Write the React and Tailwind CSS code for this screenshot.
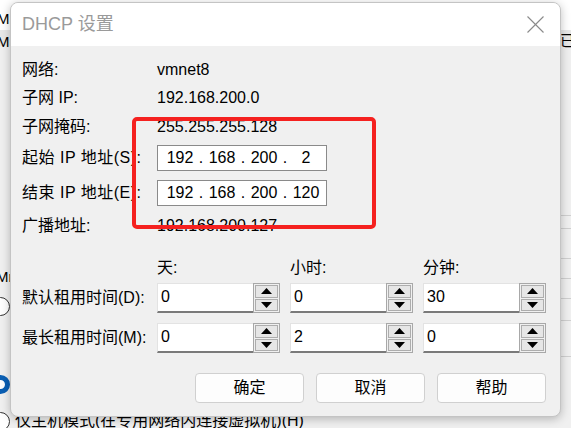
import React from 'react';

const infoRows = [
  { label: '网络:', value: 'vmnet8', h: 'h-[28px]' },
  { label: '子网 IP:', value: '192.168.200.0', h: 'h-[28px]' },
  { label: '子网掩码:', value: '255.255.255.128', h: 'h-[30px]' },
  { label: '起始 IP 地址(S):', ip: ['192', '168', '200', '2'], h: 'h-[32px]' },
  { label: '结束 IP 地址(E):', ip: ['192', '168', '200', '120'], h: 'h-[38px]' },
  { label: '广播地址:', value: '192.168.200.127', h: 'h-[28px]' },
];

const IpBox = ({ parts }) => (
  <div className="flex items-center w-[170px] h-[26px] bg-white border border-[#8a8a8a] pl-[7px]">
    {parts.map((p, i) => (
      <React.Fragment key={i}>
        <span className="w-[30px] text-center">{p}</span>
        {i < 3 && <span className="w-[12px] text-center">.</span>}
      </React.Fragment>
    ))}
  </div>
);

const Arrow = ({ up }) => (
  <div className="flex-1 flex items-center justify-center bg-[#e6e6e6] border border-[#adadad]">
    <svg width="11" height="6" viewBox="0 0 11 6">
      {up ? <polygon points="0,6 11,6 5.5,0" fill="#000" /> : <polygon points="0,0 11,0 5.5,6" fill="#000" />}
    </svg>
  </div>
);

const Spin = ({ value }) => (
  <div className="flex w-[123px] h-[30px] shrink-0">
    <div className="flex-1 bg-white border-t border-l border-[#e3e3e3] border-b-2 border-b-[#7a7a7a] pl-[3px] pt-[3px] text-[16px] leading-[20px]">
      {value}
    </div>
    <div className="w-[27px] flex flex-col gap-[1px] p-[1px] border border-[#a8a8a8] bg-[#f0f0f0]">
      <Arrow up />
      <Arrow />
    </div>
  </div>
);

const Button = ({ children }) => (
  <button className="w-[109px] h-[30px] rounded-[4px] border border-[#d0d0d0] bg-[#fdfdfd] text-[16px] text-black">
    {children}
  </button>
);

export default function App() {
  return (
    <div className="relative w-[571px] h-[428px] overflow-hidden bg-[#f0f0f0] text-black font-['Liberation_Sans','Noto_Sans_CJK_SC',sans-serif]">
      {/* window behind the dialog */}
      <div className="absolute left-0 top-0 w-full h-[30px] bg-white" />
      <div className="absolute left-0 top-[30px] w-full h-[16px] bg-[#e8e8e8]" />
      <span className="absolute left-[-3px] top-[8px] text-[15px]">Mn</span>
      <span className="absolute left-[-3px] top-[31px] text-[15px]">Mn</span>
      <span className="absolute left-[560px] top-[30px] text-[15px]">已</span>
      <span className="absolute left-[-4px] top-[266px] text-[15px]">Mn</span>
      <div className="absolute left-[-9px] top-[297px] w-[19px] h-[19px] rounded-full border border-[#333] bg-white" />
      <div className="absolute left-[-9px] top-[375px] w-[19px] h-[19px] rounded-full border-[5px] border-[#0a5fb4] bg-white" />
      <div className="absolute left-[-9px] top-[412px] w-[19px] h-[19px] rounded-full border border-[#333] bg-white" />
      <span className="absolute left-[15px] top-[409px] text-[16px] whitespace-nowrap">仅主机模式(在专用网络内连接虚拟机)(H)</span>
      {[215, 228, 258, 278, 298, 320, 356].map((y) => (
        <div key={y} className="absolute left-[560px] w-[11px] h-px bg-[#d0d0d0]" style={{ top: y }} />
      ))}

      {/* dialog */}
      <div className="absolute left-[10px] top-[2px] w-[551px] h-[415px] rounded-[8px] border border-[#c4c4c4] bg-[#f0f0f0] shadow-[0_2px_10px_rgba(0,0,0,0.25)] overflow-hidden flex flex-col">
        <div className="h-[43px] shrink-0 bg-white flex items-center justify-between pl-[11px] pr-[16px]">
          <span className="text-[18px] text-[#9a9a9a]">DHCP 设置</span>
          <svg width="17" height="17" viewBox="0 0 17 17" stroke="#8a8a8a" strokeWidth="1.1">
            <line x1="0.5" y1="0.5" x2="16.5" y2="16.5" />
            <line x1="16.5" y1="0.5" x2="0.5" y2="16.5" />
          </svg>
        </div>

        <div className="flex flex-col pl-[11px] pr-[14px] pt-[10px] text-[16px]">
          {infoRows.map((r) => (
            <div key={r.label} className={`flex items-center ${r.h}`}>
              <span className={`w-[135px] shrink-0 whitespace-nowrap ${r.ip ? 'tracking-[0.5px]' : ''}`}>{r.label}</span>
              {r.ip ? <IpBox parts={r.ip} /> : <span>{r.value}</span>}
            </div>
          ))}

          <div className="flex items-center h-[24px] mt-[16px]">
            <span className="w-[135px] shrink-0" />
            <span className="w-[133px] shrink-0">天:</span>
            <span className="w-[133px] shrink-0">小时:</span>
            <span>分钟:</span>
          </div>

          <div className="flex items-center mt-[3px] gap-[10px]">
            <span className="w-[125px] shrink-0 whitespace-nowrap">默认租用时间(D):</span>
            <Spin value="0" />
            <Spin value="0" />
            <Spin value="30" />
          </div>
          <div className="flex items-center mt-[10px] gap-[10px]">
            <span className="w-[125px] shrink-0 whitespace-nowrap">最长租用时间(M):</span>
            <Spin value="0" />
            <Spin value="2" />
            <Spin value="0" />
          </div>

          <div className="flex justify-end gap-[12px] mt-[20px]">
            <Button>确定</Button>
            <Button>取消</Button>
            <Button>帮助</Button>
          </div>
        </div>
      </div>

      {/* red highlight */}
      <div className="absolute left-[132px] top-[117px] w-[244px] h-[112px] rounded-[5px] border-[4px] border-[#f5211f]" />
    </div>
  );
}
